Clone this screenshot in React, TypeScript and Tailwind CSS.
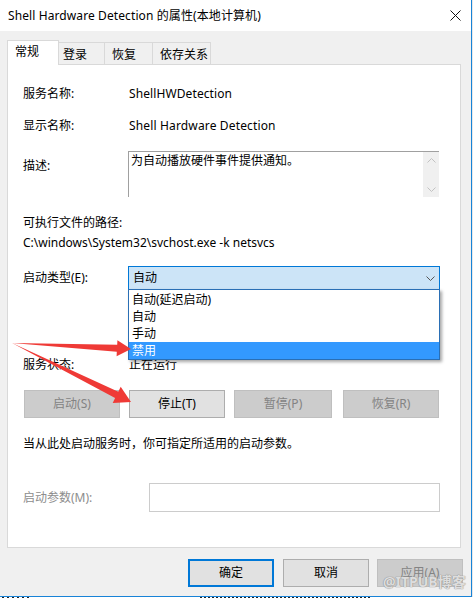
import React from "react";

const font = "font-['Noto_Sans','Noto_Sans_CJK_SC',sans-serif]";

function Chevron({ up = false, color = "#444" }: { up?: boolean; color?: string }) {
  return (
    <svg width="9" height="5" viewBox="0 0 9 5" className="block">
      <path
        d={up ? "M0.5 4.5 L4.5 0.5 L8.5 4.5" : "M0.5 0.5 L4.5 4.5 L8.5 0.5"}
        fill="none"
        stroke={color}
        strokeWidth="1"
      />
    </svg>
  );
}

function Btn({
  label,
  w,
  disabled = false,
  primary = false,
  className = "",
}: {
  label: string;
  w: string;
  disabled?: boolean;
  primary?: boolean;
  className?: string;
}) {
  const base = "h-[28px] flex items-center justify-center text-[12px] ";
  const look = disabled
    ? "bg-[#cccccc] border border-[#bfbfbf] text-[#838383]"
    : primary
    ? "bg-[#e1e1e1] border-2 border-[#0078d7] text-black"
    : "bg-[#e1e1e1] border border-[#adadad] text-black";
  return <div className={`${base} ${look} ${w} ${className}`}>{label}</div>;
}

export default function App() {
  return (
    <div className={`relative w-[473px] h-[599px] overflow-hidden bg-white text-[12px] text-black ${font}`}>
      <div className="flex h-[597px]">
        <div className="w-[472px] h-[597px] flex flex-col border-r border-b border-[#1883d7]">
          {/* title bar */}
          <div className="h-[31px] bg-white flex items-center pl-[8px]">
            <span className="leading-[16px] tracking-[0.1px]">Shell Hardware Detection 的属性(本地计算机)</span>
            <svg width="11" height="11" viewBox="0 0 11 11" className="ml-auto mr-[10px]">
              <path d="M0.5 0.5 L10.5 10.5 M10.5 0.5 L0.5 10.5" stroke="#111" strokeWidth="1" />
            </svg>
          </div>
          {/* body */}
          <div className="flex-1 bg-[#f0f0f0] flex flex-col pl-[7px] pt-[9px]">
            {/* tabs */}
            <div className="flex items-end h-[24px]">
              <div className="relative z-10 -mb-px h-[25px] w-[52px] bg-white border-l border-t border-r border-[#d9d9d9] pl-[7px] pt-[3px] leading-[16px]">
                常规
              </div>
              <div className="h-[22px] w-[46px] border-t border-r border-[#d9d9d9] pl-[4px] pt-[4px] leading-[16px]">
                登录
              </div>
              <div className="h-[22px] w-[48px] border-t border-r border-[#d9d9d9] pl-[7px] pt-[4px] leading-[16px]">
                恢复
              </div>
              <div className="h-[22px] w-[58px] border-t border-r border-[#d9d9d9] pl-[7px] pt-[4px] leading-[16px]">
                依存关系
              </div>
            </div>
            {/* panel */}
            <div className="w-[454px] h-[484px] bg-white border border-[#d9d9d9] flex flex-col pl-[15px] pt-[21px]">
              <div className="flex h-[16px] items-center leading-[16px]">
                <span className="w-[106px]">服务名称:</span>
                <span className="tracking-[0.1px]">ShellHWDetection</span>
              </div>
              <div className="flex h-[16px] items-center leading-[16px] mt-[16px]">
                <span className="w-[106px]">显示名称:</span>
                <span className="tracking-[0.15px]">Shell Hardware Detection</span>
              </div>
              <div className="flex h-[46px] mt-[17px]">
                <span className="w-[105px] pt-[7px] leading-[16px]">描述:</span>
                <div className="w-[311px] h-[46px] border-t border-l border-[#a0a0a0] flex">
                  <div className="flex-1 pl-[2px] pt-[1px] leading-[16px]">为自动播放硬件事件提供通知。</div>
                  <div className="w-[16px] bg-[#f0f0f0] flex flex-col items-center justify-between pt-[6px] pb-[5px]">
                    <Chevron up color="#c2c2c2" />
                    <Chevron color="#c2c2c2" />
                  </div>
                </div>
              </div>
              <div className="h-[16px] leading-[16px] mt-[18px]">可执行文件的路径:</div>
              <div className="h-[16px] leading-[16px] mt-[4px]">C:\windows\System32\svchost.exe -k netsvcs</div>
              <div className="flex h-[24px] items-center mt-[15px]">
                <span className="w-[105px] leading-[16px]">启动类型(E):</span>
                <div className="relative w-[312px] h-[24px] border border-[#0078d7] bg-[#cce4f7] flex items-center pl-[4px] pr-[4px]">
                  <span className="leading-[16px]">自动</span>
                  <span className="ml-auto">
                    <Chevron color="#555" />
                  </span>
                  {/* dropdown list */}
                  <div className="absolute left-[-1px] top-full z-20 w-[312px] bg-white border border-[#2a6fb5] pt-px shadow-[2px_2px_3px_rgba(0,0,0,0.35)]">
                    <div className="h-[17px] leading-[17px] pl-[3px]">自动(延迟启动)</div>
                    <div className="h-[17px] leading-[17px] pl-[3px]">自动</div>
                    <div className="h-[17px] leading-[17px] pl-[3px]">手动</div>
                    <div className="h-[17px] leading-[17px] pl-[3px] bg-[#3399ff] text-white">禁用</div>
                  </div>
                </div>
              </div>
              <div className="flex h-[16px] items-center leading-[16px] mt-[67px]">
                <span className="w-[106px]">服务状态:</span>
                <span>正在运行</span>
              </div>
              <div className="flex h-[28px] mt-[17px]">
                <Btn label="启动(S)" w="w-[96px]" disabled className="ml-[1px]" />
                <Btn label="停止(T)" w="w-[96px]" className="ml-[9px]" />
                <Btn label="暂停(P)" w="w-[98px]" disabled className="ml-[9px]" />
                <Btn label="恢复(R)" w="w-[96px]" disabled className="ml-[11px]" />
              </div>
              <div className="h-[16px] leading-[16px] mt-[18px]">当从此处启动服务时，你可指定所适用的启动参数。</div>
              <div className="flex h-[29px] items-center mt-[31px]">
                <span className="w-[126px] leading-[16px] text-[#8d8d8d]">启动参数(M):</span>
                <div className="w-[291px] h-[29px] border border-[#cccccc] bg-white" />
              </div>
            </div>
            {/* bottom buttons */}
            <div className="flex mt-[11px] pl-[181px]">
              <Btn label="确定" w="w-[86px]" primary />
              <Btn label="取消" w="w-[86px]" className="ml-[9px]" />
              <Btn label="应用(A)" w="w-[86px]" disabled className="ml-[8px]" />
            </div>
          </div>
        </div>
        <div className="flex-1 bg-[#e8e8e8]" />
      </div>
      {/* strip of the window behind */}
      <div className="flex h-[2px] bg-white">
        <div className="ml-[2px] w-[28px] h-px bg-[repeating-linear-gradient(90deg,#222_0_2px,transparent_2px_5px)]" />
        <div className="ml-[170px] w-[170px] h-px bg-[repeating-linear-gradient(90deg,#222_0_2px,transparent_2px_4px)]" />
      </div>
      {/* watermark */}
      <div className="absolute left-[383px] top-[573px] z-30 text-[14px] font-bold leading-[18px] text-[rgba(245,245,245,0.8)] [text-shadow:0_0_1px_#8a8a8a,0_0_1px_#8a8a8a]">
        @ITPUB博客
      </div>
      {/* red arrows */}
      <svg className="absolute left-0 top-0 z-40 pointer-events-none" width="473" height="599" viewBox="0 0 473 599">
        <polygon
          points="12,343 117.2,344.8 117.4,340.3 131,349 116.6,356.3 116.8,351.8"
          fill="#ef3a36"
        />
        <polygon
          points="12,343 118.3,391.8 120.7,386.8 131,402 112.7,403 115.1,398"
          fill="#ef3a36"
        />
      </svg>
    </div>
  );
}
